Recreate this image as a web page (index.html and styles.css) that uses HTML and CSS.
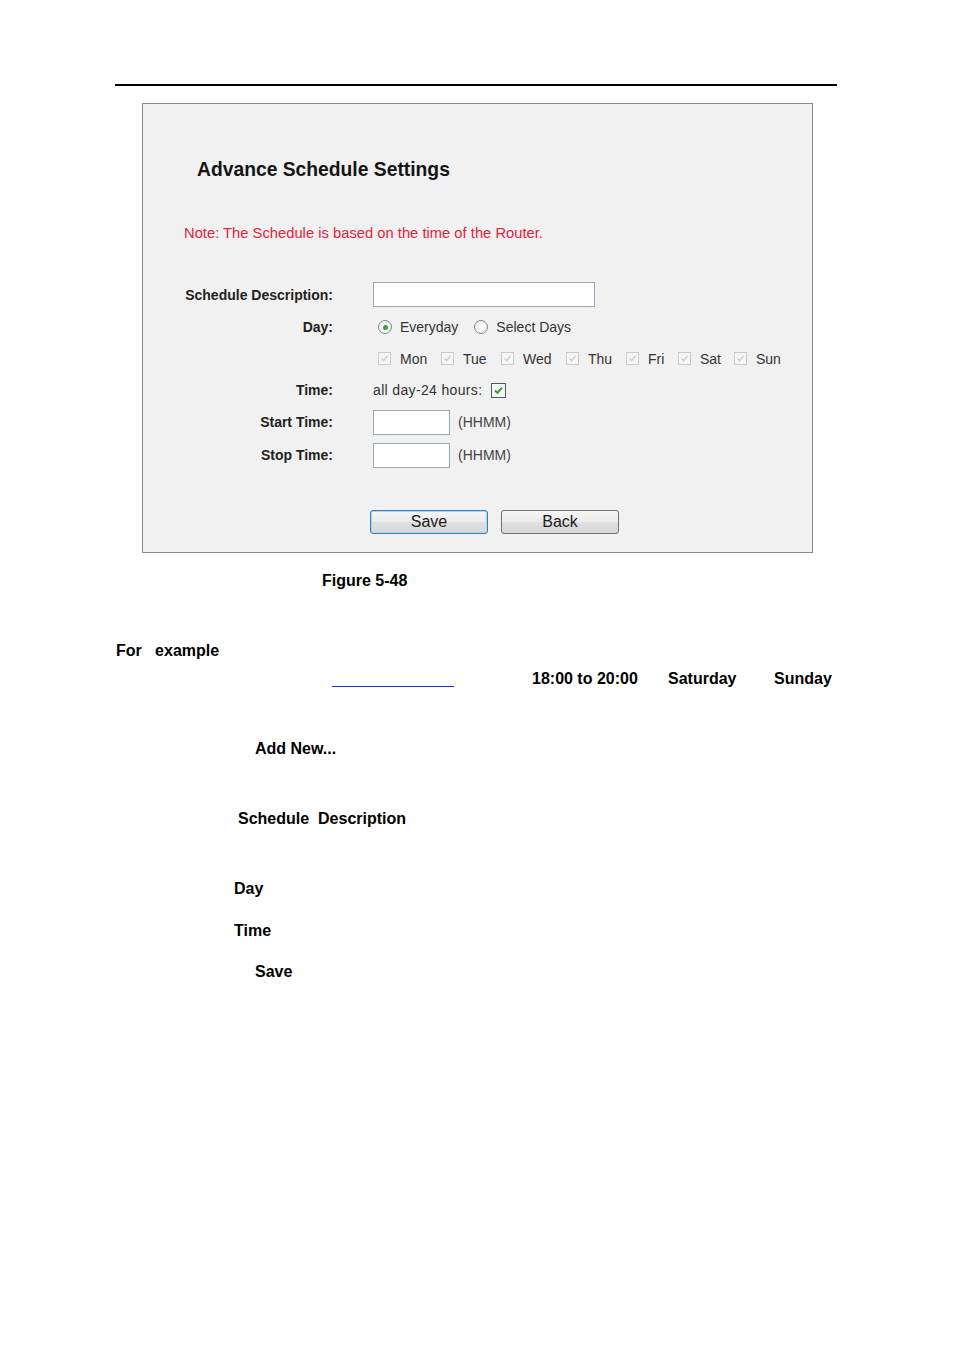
FILE: index.html
```html
<!DOCTYPE html>
<html>
<head>
<meta charset="utf-8">
<link rel="stylesheet" href="styles.css">
</head>
<body>
<div class="page">
  <div class="rule"></div>
  <div class="panel">
    <div class="title">Advance Schedule Settings</div>
    <div class="note">Note: The Schedule is based on the time of the Router.</div>
    <div class="form">
      <div class="label">Schedule Description:</div>
      <div class="field"><span class="input wide"></span></div>

      <div class="label">Day:</div>
      <div class="field">
        <span class="radio checked"></span><span class="opt">Everyday</span>
        <span class="radio second"></span><span class="opt">Select Days</span>
      </div>

      <div class="label"></div>
      <div class="field days">
        <span class="day d-mon"><span class="cb"><svg viewBox="0 0 13 13"><polyline points="3,6.5 5.5,9 10,3.5" /></svg></span>Mon</span>
        <span class="day d-tue"><span class="cb"><svg viewBox="0 0 13 13"><polyline points="3,6.5 5.5,9 10,3.5" /></svg></span>Tue</span>
        <span class="day d-wed"><span class="cb"><svg viewBox="0 0 13 13"><polyline points="3,6.5 5.5,9 10,3.5" /></svg></span>Wed</span>
        <span class="day d-thu"><span class="cb"><svg viewBox="0 0 13 13"><polyline points="3,6.5 5.5,9 10,3.5" /></svg></span>Thu</span>
        <span class="day d-fri"><span class="cb"><svg viewBox="0 0 13 13"><polyline points="3,6.5 5.5,9 10,3.5" /></svg></span>Fri</span>
        <span class="day d-sat"><span class="cb"><svg viewBox="0 0 13 13"><polyline points="3,6.5 5.5,9 10,3.5" /></svg></span>Sat</span>
        <span class="day d-sun"><span class="cb"><svg viewBox="0 0 13 13"><polyline points="3,6.5 5.5,9 10,3.5" /></svg></span>Sun</span>
      </div>

      <div class="label">Time:</div>
      <div class="field"><span class="plain">all day-24 hours:</span><span class="cb active"><svg viewBox="0 0 15 15"><polyline points="3.5,7.5 6.3,10.3 11.5,4.2" /></svg></span></div>

      <div class="label">Start Time:</div>
      <div class="field"><span class="input short"></span><span class="hint">(HHMM)</span></div>

      <div class="label">Stop Time:</div>
      <div class="field"><span class="input short"></span><span class="hint">(HHMM)</span></div>
    </div>
    <div class="buttons">
      <span class="btn focus">Save</span>
      <span class="btn">Back</span>
    </div>
  </div>

  <div class="line caption">Figure 5-48</div>
  <div class="line l-for">For   example</div>
  <div class="line l-times">
    <span class="blank"></span>
    <span class="w136">18:00 to 20:00</span>
    <span class="w106">Saturday</span>
    <span>Sunday</span>
  </div>
  <div class="line l-add">Add New...</div>
  <div class="line l-desc">Schedule  Description</div>
  <div class="line l-day">Day</div>
  <div class="line l-time">Time</div>
  <div class="line l-save">Save</div>
</div>
</body>
</html>
```

FILE: styles.css
```css
html, body {
  margin: 0;
  padding: 0;
  background: #ffffff;
}

.page {
  padding-top: 84px;
  font-family: "Liberation Sans", Arial, sans-serif;
  color: #000;
}

.rule {
  margin-left: 115px;
  width: 722px;
  height: 2px;
  background: #000;
}

.panel {
  box-sizing: border-box;
  margin-top: 17px;
  margin-left: 142px;
  width: 671px;
  height: 450px;
  border: 1px solid #8a8a8a;
  background: #f1f1f1;
  overflow: hidden;
}

.title {
  margin-top: 54px;
  padding-left: 54px;
  font-size: 19.3px;
  line-height: 24px;
  font-weight: bold;
  color: #141414;
}

.note {
  margin-top: 41px;
  padding-left: 41px;
  font-size: 14.7px;
  line-height: 20px;
  color: #e4223c;
  letter-spacing: 0.03px;
}

.form {
  margin-top: 35px;
  display: grid;
  grid-template-columns: 190px 1fr;
  grid-template-rows: 33px 32px 31px 32px 32px 34px;
  column-gap: 40px;
  align-items: center;
}

.label {
  text-align: right;
  font-size: 14px;
  font-weight: bold;
  color: #222;
}

.field {
  display: flex;
  align-items: center;
  font-size: 14px;
  color: #333;
}

.input {
  box-sizing: border-box;
  display: block;
  height: 25px;
  background: #fff;
  border: 1px solid #9aa7b6;
}

.input.wide { width: 222px; }
.input.short { width: 77px; }

.hint {
  margin-left: 8px;
  font-size: 14px;
  color: #444;
}

.radio {
  box-sizing: border-box;
  width: 14px;
  height: 14px;
  margin-left: 5px;
  border-radius: 50%;
  border: 1px solid #7d8690;
  background: radial-gradient(circle, #ffffff 0%, #ececec 100%);
  position: relative;
}

.radio.second { margin-left: 16px; }

.radio.checked::after {
  content: "";
  position: absolute;
  left: 3.5px;
  top: 3.5px;
  width: 5px;
  height: 5px;
  border-radius: 50%;
  background: #35a33a;
}

.opt {
  margin-left: 8px;
  color: #333;
}

.days {
  padding-left: 5px;
}

.day {
  display: flex;
  align-items: center;
  gap: 9px;
  color: #333;
}

.d-mon { width: 63px; }
.d-tue { width: 60px; }
.d-wed { width: 65px; }
.d-thu { width: 60px; }
.d-fri { width: 52px; }
.d-sat { width: 56px; }

.cb {
  box-sizing: border-box;
  display: block;
  width: 13px;
  height: 13px;
  border: 1px solid #cacaca;
  background: #f6f6f6;
}

.cb svg {
  display: block;
  width: 100%;
  height: 100%;
}

.cb polyline {
  fill: none;
  stroke: #c4c4c4;
  stroke-width: 1.4;
}

.cb.active {
  width: 15px;
  height: 15px;
  margin-left: 9px;
  border: 1px solid #4d5b68;
  background: #f4f6f8;
}

.cb.active polyline {
  stroke: #22a02a;
  stroke-width: 2.2;
}

.plain {
  color: #333;
  letter-spacing: 0.35px;
}

.buttons {
  margin-top: 38px;
  padding-left: 227px;
  display: flex;
  gap: 13px;
}

.btn {
  box-sizing: border-box;
  width: 118px;
  height: 24px;
  border: 1px solid #707070;
  border-radius: 3px;
  background: linear-gradient(#f6f6f6, #ececec 50%, #e0e0e0 51%, #d8d8d8);
  font-size: 16px;
  line-height: 22px;
  text-align: center;
  color: #1a1a1a;
}

.btn.focus {
  border-color: #3c7fb1;
  box-shadow: inset 0 0 0 1px #a8d8f0;
}

.line {
  font-size: 16px;
  font-weight: bold;
  line-height: 20px;
  white-space: pre;
}

.caption { margin-top: 18px; padding-left: 322px; }
.l-for { margin-top: 50px; padding-left: 116px; }
.l-times {
  margin-top: 8px;
  display: flex;
  align-items: flex-start;
}
.blank {
  margin-left: 332px;
  width: 122px;
  height: 17px;
  border-bottom: 1px solid #2233cc;
  margin-right: 78px;
}
.w136 { width: 136px; }
.w106 { width: 106px; }
.l-add { margin-top: 50px; padding-left: 255px; }
.l-desc { margin-top: 50px; padding-left: 238px; }
.l-day { margin-top: 50px; padding-left: 234px; }
.l-time { margin-top: 22px; padding-left: 234px; }
.l-save { margin-top: 21px; padding-left: 255px; }
```
